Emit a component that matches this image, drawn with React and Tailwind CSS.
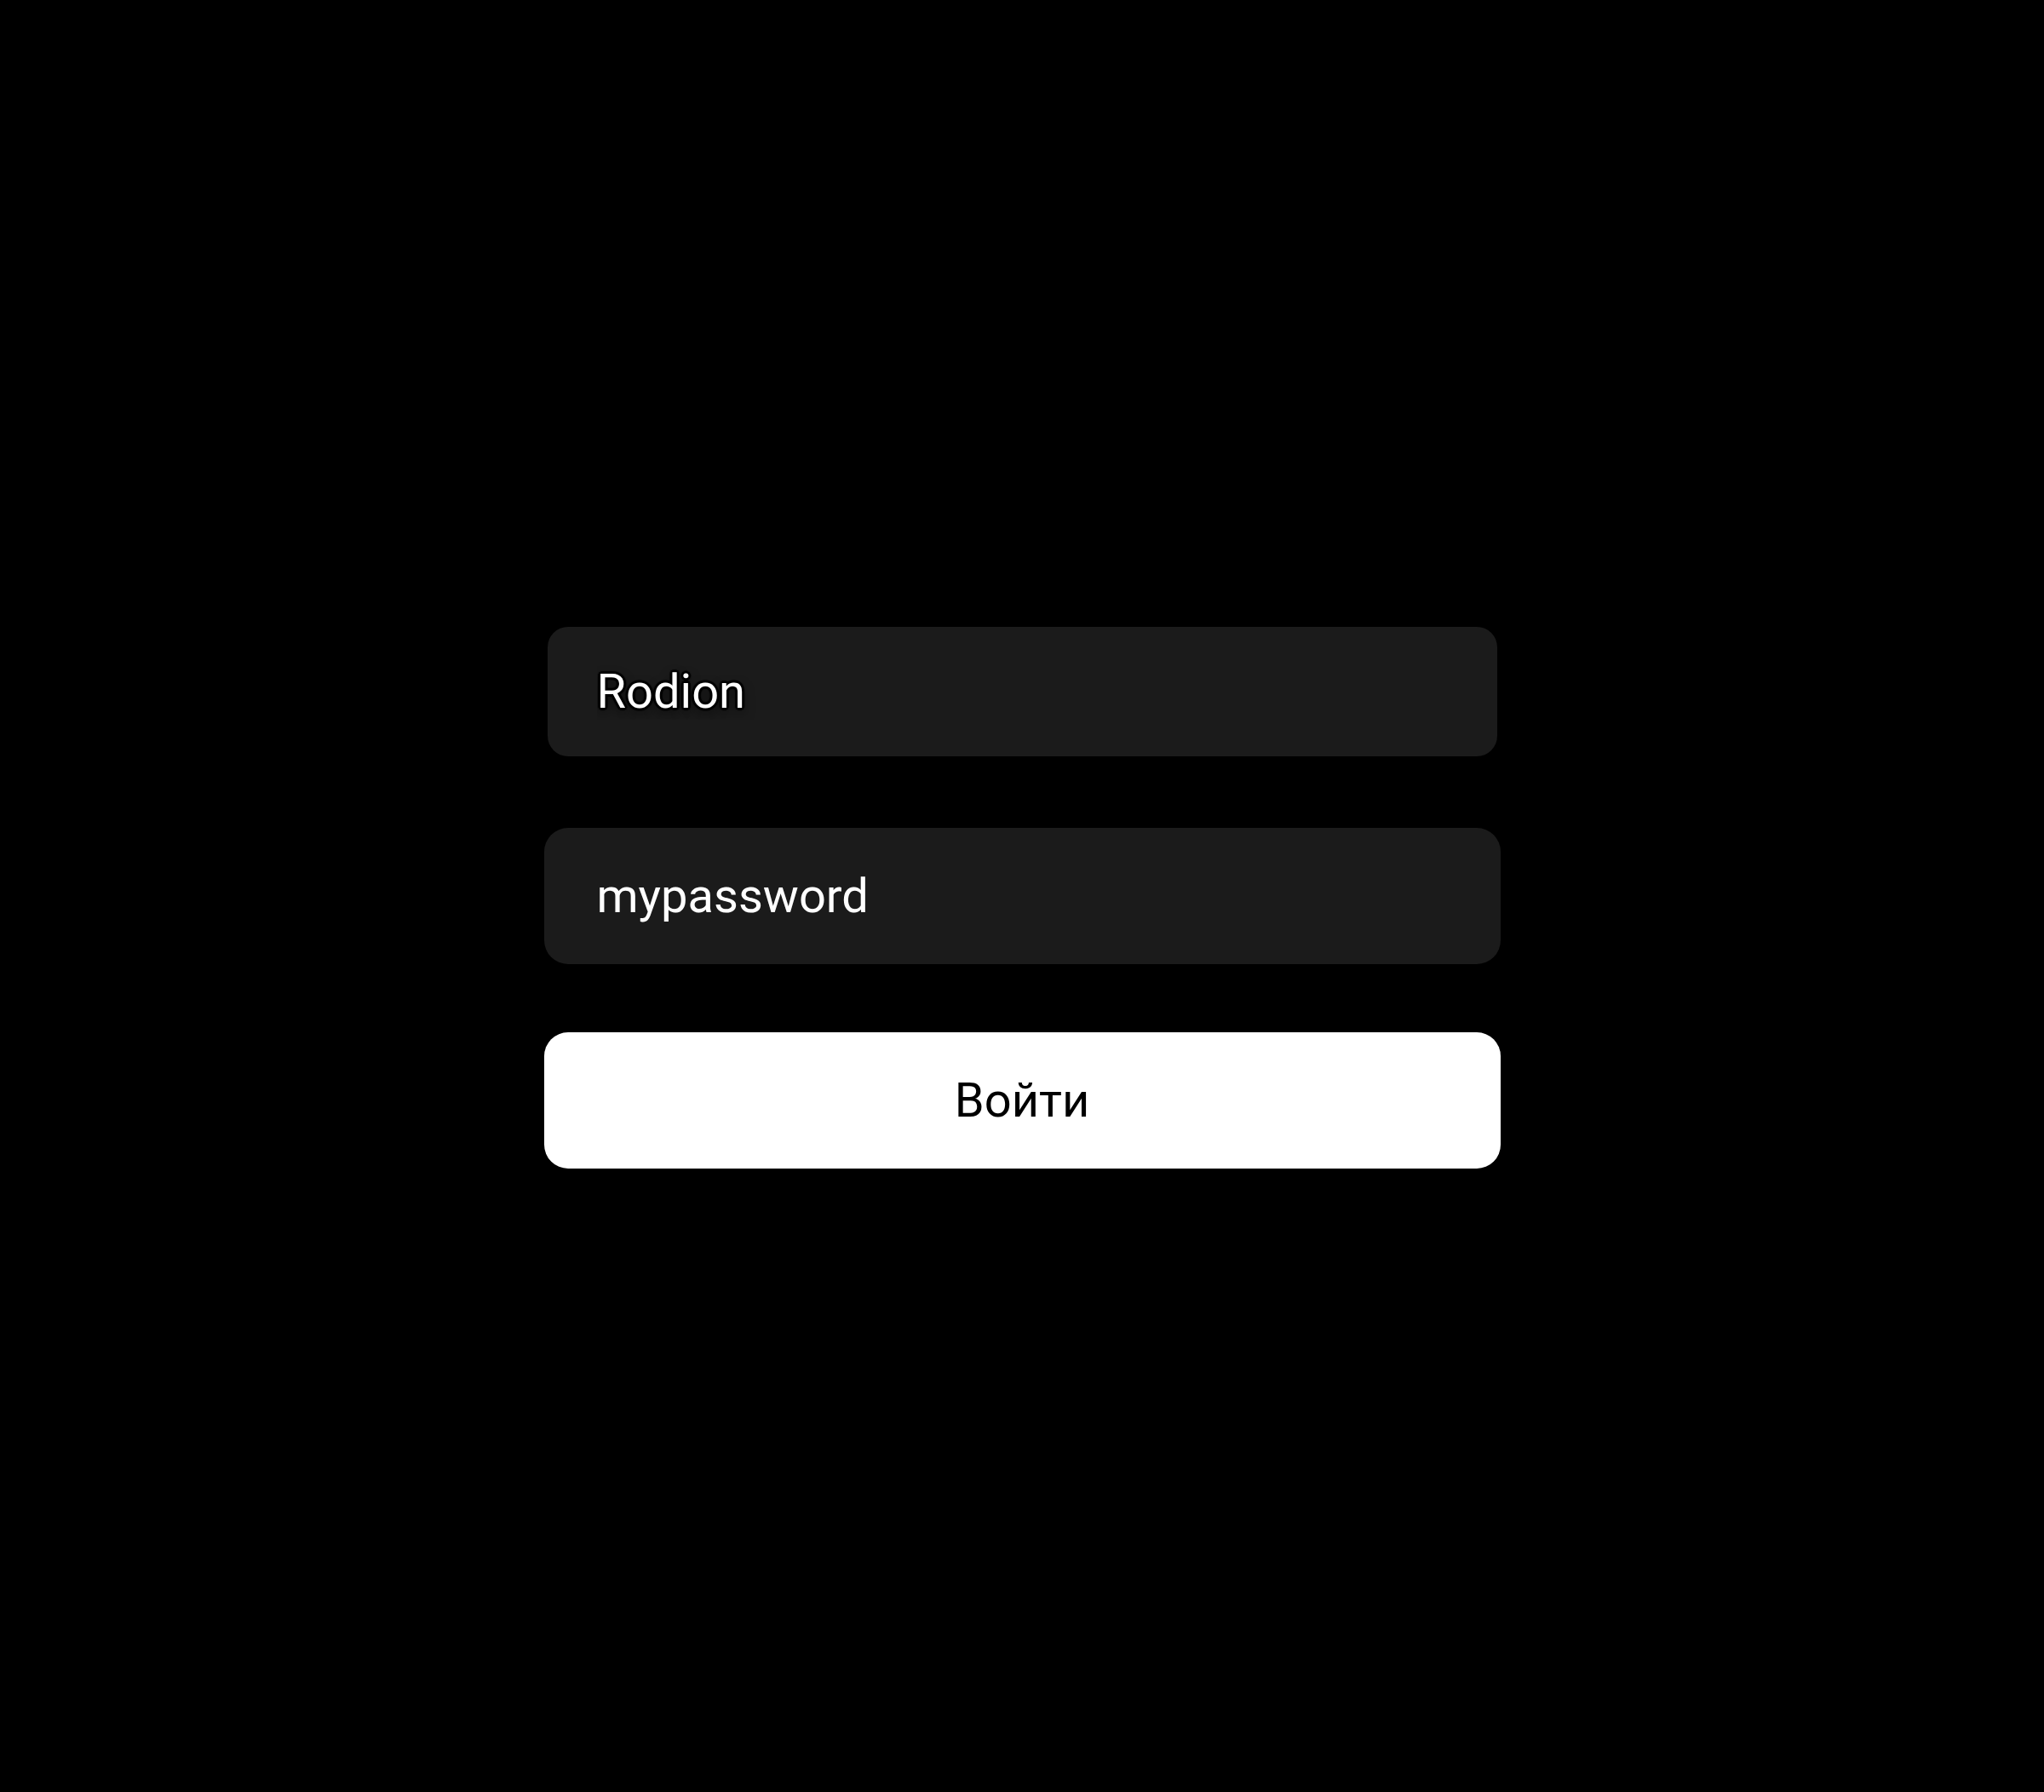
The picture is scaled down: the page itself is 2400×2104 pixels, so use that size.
import React from 'react';

export default function App() {
  return (
    <div className="min-h-screen w-full bg-black flex items-center justify-center font-['Roboto',_'Noto_Sans',_sans-serif]">
      <form className="w-[1123px] flex flex-col gap-[80px]" onSubmit={(e) => e.preventDefault()}>
        <div className="p-[4px]">
          <input
            type="text"
            defaultValue="Rodion"
            className="w-full h-[152px] rounded-[24px] bg-[#1b1b1b] pl-[58px] pr-[40px] text-[56px] text-white outline-none [text-shadow:-3px_0_1px_#000,3px_0_1px_#000,0_-3px_1px_#000,0_3px_1px_#000,-2px_-2px_1px_#000,2px_2px_1px_#000,-2px_2px_1px_#000,2px_-2px_1px_#000,0_6px_14px_rgba(0,0,0,0.7)]"
          />
        </div>
        <input
          type="text"
          defaultValue="mypassword"
          className="w-full h-[160px] rounded-[28px] bg-[#1b1b1b] pl-[62px] pr-[40px] text-[56px] text-white outline-none"
        />
        <button
          type="submit"
          className="w-full h-[160px] rounded-[28px] bg-white text-black text-[56px]"
        >
          Войти
        </button>
      </form>
    </div>
  );
}
